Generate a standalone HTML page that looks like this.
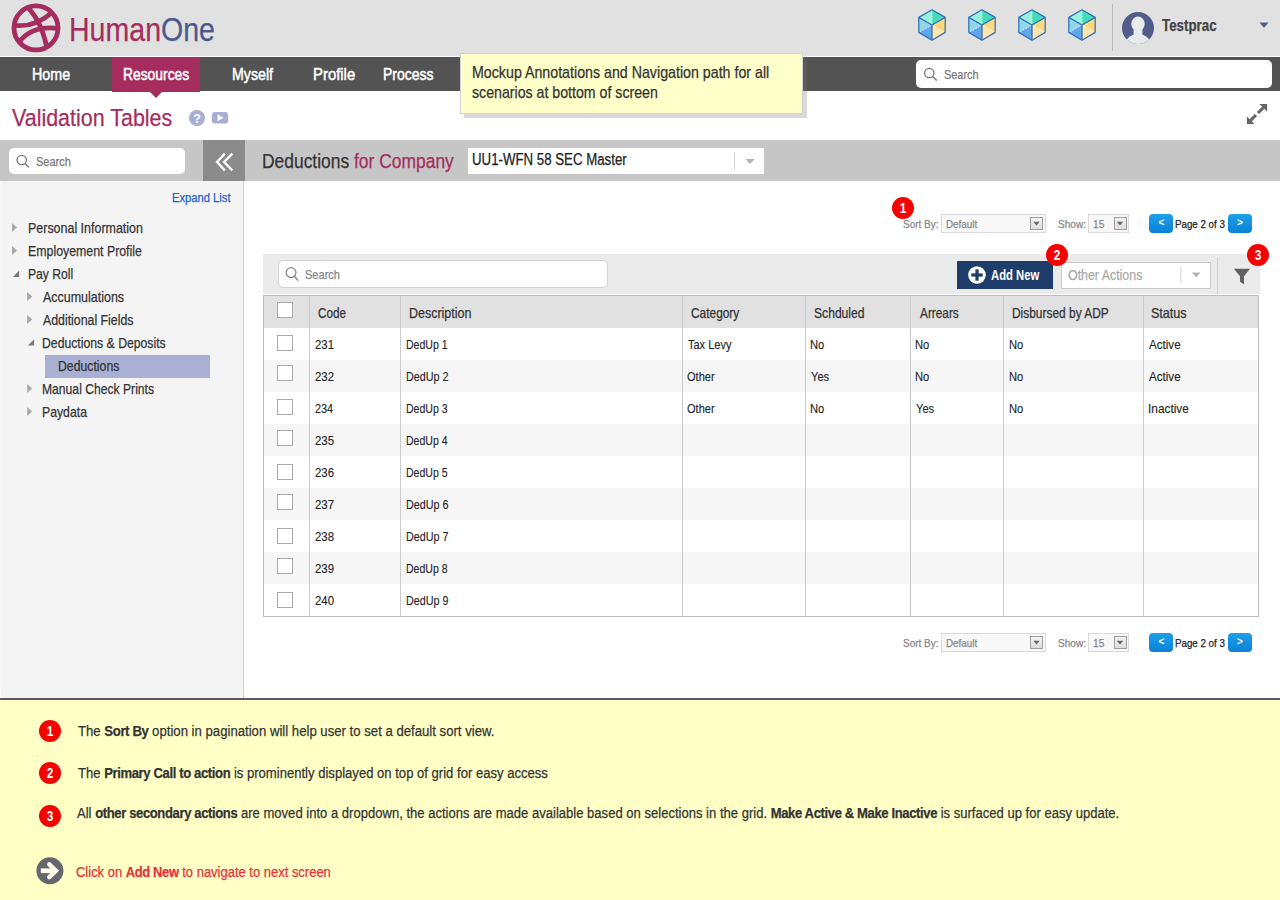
<!DOCTYPE html>
<html><head><meta charset="utf-8"><title>Validation Tables</title>
<style>
html,body{margin:0;padding:0;width:1280px;height:900px;overflow:hidden;background:#fff;font-family:"Liberation Sans",sans-serif;position:relative}
.a{position:absolute;box-sizing:border-box}
.t{position:absolute;line-height:1;white-space:nowrap;transform-origin:0 0;-webkit-text-stroke-width:0.25px}
b{font-weight:700;letter-spacing:-0.45px}
svg{position:absolute;left:0;top:0;overflow:visible}
.cb{position:absolute;width:16px;height:16px;box-sizing:border-box;border:1px solid #ababab;background:#fff;left:277px}
.badge{position:absolute;width:22px;height:22px;border-radius:50%;background:#f70000;color:#fff;font-weight:700;font-size:14.5px;line-height:22px;text-align:center}
.badge i{font-style:normal;display:inline-block;transform:scaleX(.82)}
.pbtn{position:absolute;width:24px;height:18.5px;border-radius:4px;background:linear-gradient(#1ea0ea,#0a82d6);color:#fff;font-size:10px;font-weight:700;line-height:18px;text-align:center}
.sel{position:absolute;height:18.5px;box-sizing:border-box;border:1px solid #d9d9d9;background:#f8f8f8}
.dd{position:absolute;width:13px;height:13px;box-sizing:border-box;border:1px solid #9d9d9d;background:linear-gradient(#f4f4f4,#dcdcdc)}
</style></head><body>
<!-- header -->
<div class="a" style="left:0;top:0;width:1280px;height:56px;background:#e1e1e1"></div>
<div class="a" style="left:0;top:57px;width:1280px;height:34px;background:#535353"></div>
<div class="a" style="left:112px;top:57px;width:88px;height:35px;background:#a52d5e"></div>
<svg width="1280" height="900" style="z-index:1">
 <!-- logo -->
 <g fill="none" stroke="#a52d5e" stroke-width="4.8">
  <circle cx="36" cy="27.9" r="22"/>
  <path d="M29,8.5 C36,17 42,26 46.5,46"/>
  <path d="M15.5,25.5 C26,26.5 39,24 52,12.5"/>
  <path d="M20,41 C28,31 40,26.5 57.5,28.3"/>
 </g>
 <!-- resources pointer -->
 <polygon points="149.5,91.5 162.5,91.5 156,98" fill="#a52d5e"/>
 <!-- cubes -->
 <polygon points="932.0,9.7 932.0,25.0 918.8,17.4" fill="#9bf2dc"/><polygon points="932.0,9.7 945.2,17.4 932.0,25.0" fill="#45dcb9"/><polygon points="918.8,17.4 932.0,25.0 918.8,32.4" fill="#8fd8ec"/><polygon points="932.0,25.0 932.0,40.2 918.8,32.4" fill="#62a6ea"/><polygon points="932.0,25.0 945.2,17.4 945.2,32.4" fill="#ffd77c"/><polygon points="932.0,25.0 945.2,32.4 932.0,40.2" fill="#ffe6a8"/><g stroke="#fff" stroke-width="0.9" stroke-dasharray="1.5,1.5" opacity="0.9"><line x1="932.0" y1="9.7" x2="932.0" y2="25.0"/><line x1="932.0" y1="25.0" x2="918.8" y2="32.4"/><line x1="932.0" y1="25.0" x2="945.2" y2="32.4"/></g><g fill="none" stroke="#3070b8" stroke-width="1.25" stroke-linejoin="round"><polygon points="932.0,9.7 945.2,17.4 945.2,32.4 932.0,40.2 918.8,32.4 918.8,17.4"/><polyline points="918.8,17.4 932.0,25.0 945.2,17.4"/><line x1="932.0" y1="25.0" x2="932.0" y2="40.2"/></g><polygon points="982.0,9.7 982.0,25.0 968.8,17.4" fill="#9bf2dc"/><polygon points="982.0,9.7 995.2,17.4 982.0,25.0" fill="#45dcb9"/><polygon points="968.8,17.4 982.0,25.0 968.8,32.4" fill="#8fd8ec"/><polygon points="982.0,25.0 982.0,40.2 968.8,32.4" fill="#62a6ea"/><polygon points="982.0,25.0 995.2,17.4 995.2,32.4" fill="#ffd77c"/><polygon points="982.0,25.0 995.2,32.4 982.0,40.2" fill="#ffe6a8"/><g stroke="#fff" stroke-width="0.9" stroke-dasharray="1.5,1.5" opacity="0.9"><line x1="982.0" y1="9.7" x2="982.0" y2="25.0"/><line x1="982.0" y1="25.0" x2="968.8" y2="32.4"/><line x1="982.0" y1="25.0" x2="995.2" y2="32.4"/></g><g fill="none" stroke="#3070b8" stroke-width="1.25" stroke-linejoin="round"><polygon points="982.0,9.7 995.2,17.4 995.2,32.4 982.0,40.2 968.8,32.4 968.8,17.4"/><polyline points="968.8,17.4 982.0,25.0 995.2,17.4"/><line x1="982.0" y1="25.0" x2="982.0" y2="40.2"/></g><polygon points="1032.0,9.7 1032.0,25.0 1018.8,17.4" fill="#9bf2dc"/><polygon points="1032.0,9.7 1045.2,17.4 1032.0,25.0" fill="#45dcb9"/><polygon points="1018.8,17.4 1032.0,25.0 1018.8,32.4" fill="#8fd8ec"/><polygon points="1032.0,25.0 1032.0,40.2 1018.8,32.4" fill="#62a6ea"/><polygon points="1032.0,25.0 1045.2,17.4 1045.2,32.4" fill="#ffd77c"/><polygon points="1032.0,25.0 1045.2,32.4 1032.0,40.2" fill="#ffe6a8"/><g stroke="#fff" stroke-width="0.9" stroke-dasharray="1.5,1.5" opacity="0.9"><line x1="1032.0" y1="9.7" x2="1032.0" y2="25.0"/><line x1="1032.0" y1="25.0" x2="1018.8" y2="32.4"/><line x1="1032.0" y1="25.0" x2="1045.2" y2="32.4"/></g><g fill="none" stroke="#3070b8" stroke-width="1.25" stroke-linejoin="round"><polygon points="1032.0,9.7 1045.2,17.4 1045.2,32.4 1032.0,40.2 1018.8,32.4 1018.8,17.4"/><polyline points="1018.8,17.4 1032.0,25.0 1045.2,17.4"/><line x1="1032.0" y1="25.0" x2="1032.0" y2="40.2"/></g><polygon points="1082.0,9.7 1082.0,25.0 1068.8,17.4" fill="#9bf2dc"/><polygon points="1082.0,9.7 1095.2,17.4 1082.0,25.0" fill="#45dcb9"/><polygon points="1068.8,17.4 1082.0,25.0 1068.8,32.4" fill="#8fd8ec"/><polygon points="1082.0,25.0 1082.0,40.2 1068.8,32.4" fill="#62a6ea"/><polygon points="1082.0,25.0 1095.2,17.4 1095.2,32.4" fill="#ffd77c"/><polygon points="1082.0,25.0 1095.2,32.4 1082.0,40.2" fill="#ffe6a8"/><g stroke="#fff" stroke-width="0.9" stroke-dasharray="1.5,1.5" opacity="0.9"><line x1="1082.0" y1="9.7" x2="1082.0" y2="25.0"/><line x1="1082.0" y1="25.0" x2="1068.8" y2="32.4"/><line x1="1082.0" y1="25.0" x2="1095.2" y2="32.4"/></g><g fill="none" stroke="#3070b8" stroke-width="1.25" stroke-linejoin="round"><polygon points="1082.0,9.7 1095.2,17.4 1095.2,32.4 1082.0,40.2 1068.8,32.4 1068.8,17.4"/><polyline points="1068.8,17.4 1082.0,25.0 1095.2,17.4"/><line x1="1082.0" y1="25.0" x2="1082.0" y2="40.2"/></g>
 <!-- divider -->
 <rect x="1112" y="4" width="1" height="47" fill="#b9b9b9"/>
 <!-- avatar -->
 <clipPath id="avc"><circle cx="1138" cy="28" r="16"/></clipPath>
 <circle cx="1138" cy="28" r="16" fill="#515c8a"/>
 <g clip-path="url(#avc)" fill="#e7ebeb">
  <ellipse cx="1138" cy="23.8" rx="6.7" ry="7.2"/>
  <ellipse cx="1138" cy="47.5" rx="14" ry="13.5"/>
  <rect x="1133.6" y="26" width="8.8" height="10"/>
 </g>
 <polygon points="1259.5,22.5 1268.5,22.5 1264,28" fill="#515c8a"/>
</svg>
<!-- nav search -->
<div class="a" style="left:916px;top:60px;width:356px;height:28px;background:#fff;border-radius:5px"></div>
<svg width="1280" height="900" style="z-index:1">
 <circle cx="929.3" cy="73" r="4.7" fill="none" stroke="#777" stroke-width="1.3"/>
 <line x1="932.7" y1="76.4" x2="936.7" y2="80.5" stroke="#777" stroke-width="1.4"/>
</svg>
<!-- tooltip -->
<div class="a" style="left:464px;top:57px;width:343px;height:61px;background:rgba(116,116,116,0.27);z-index:2"></div>
<div class="a" style="left:460px;top:53px;width:343px;height:61px;background:#ffffc9;border:1px solid #d2d2d2;z-index:2"></div>
<!-- title icons / expand -->
<svg width="1280" height="900" style="z-index:1">
 <circle cx="197" cy="118" r="8" fill="#a9afd3"/>
 <text x="197" y="122.5" font-size="12.5" font-weight="700" fill="#fff" text-anchor="middle" font-family="Liberation Sans">?</text>
 <rect x="212" y="112" width="16" height="11.5" rx="2.5" fill="#a9afd3"/>
 <polygon points="217.5,114.3 217.5,121.2 223.5,117.75" fill="#fff"/>
 <g fill="#666">
  <polygon points="1259.4,103.9 1267.1,103.9 1267.1,111.6"/>
  <polygon points="1246.9,116.4 1246.9,124.1 1254.6,124.1"/>
 </g>
 <g stroke="#666" stroke-width="3.1">
  <line x1="1263.6" y1="107.4" x2="1258" y2="113"/>
  <line x1="1256" y1="115" x2="1250.4" y2="120.6"/>
 </g>
</svg>
<!-- left panel -->
<div class="a" style="left:0;top:181px;width:243px;height:517px;background:#f4f4f4"></div>
<div class="a" style="left:0;top:181px;width:1px;height:517px;background:#fbfbfb"></div>
<div class="a" style="left:243px;top:181px;width:1px;height:517px;background:#cfcfcf"></div>
<div class="a" style="left:0;top:140px;width:203px;height:41px;background:#c6c6c6"></div>
<div class="a" style="left:9px;top:148px;width:176px;height:26px;background:#fff;border-radius:5px"></div>
<div class="a" style="left:203px;top:140px;width:42px;height:41px;background:#8b8b8b"></div>
<div class="a" style="left:245px;top:140px;width:1035px;height:41px;background:#c6c6c6"></div>
<div class="a" style="left:468px;top:148px;width:296px;height:26px;background:#fff"></div>
<div class="a" style="left:45px;top:355px;width:165px;height:23px;background:#a9b0d3"></div>
<svg width="1280" height="900" style="z-index:1">
 <circle cx="21.7" cy="160" r="4.7" fill="none" stroke="#777" stroke-width="1.3"/>
 <line x1="25.1" y1="163.4" x2="28.8" y2="167.3" stroke="#777" stroke-width="1.4"/>
 <g fill="none" stroke="#fff" stroke-width="2.3">
  <polyline points="224.8,153.6 217,162 224.8,170.4"/>
  <polyline points="232.4,153.6 224.1,162 232.4,170.4"/>
 </g>
 <!-- tree triangles -->
 <g fill="#a9a9a9">
  <polygon points="12,223 17,227.5 12,232"/>
  <polygon points="12,246 17,250.5 12,255"/>
  <polygon points="27.2,292 32.2,296.5 27.2,301"/>
  <polygon points="27.2,315 32.2,319.5 27.2,324"/>
  <polygon points="27.2,384 32.2,388.5 27.2,393"/>
  <polygon points="27.2,407 32.2,411.5 27.2,416"/>
 </g>
 <g fill="#797979">
  <polygon points="13,277 19.2,277 19.2,270.6"/>
  <polygon points="27.8,345.6 34.1,345.6 34.1,339.4"/>
 </g>
 <!-- select -->
 <rect x="734" y="152" width="1" height="18" fill="#d4d4d4"/>
 <polygon points="745.4,159 754.7,159 750,164" fill="#b3b3b3"/>
</svg>
<div class="sel" style="left:941px;top:214.3px;width:104.5px"></div><div class="dd" style="left:1030px;top:217.0px"></div><div class="sel" style="left:1088px;top:214.3px;width:40.5px"></div><div class="dd" style="left:1113.5px;top:217.0px"></div><svg width="1280" height="900" style="z-index:1"><polygon points="1033.3,221.8 1039.7,221.8 1036.5,225.6" fill="#666"/><polygon points="1116.8,221.8 1123.2,221.8 1120,225.6" fill="#666"/></svg><div class="pbtn" style="left:1149.3px;top:214.4px">&lt;</div><div class="pbtn" style="left:1228px;top:214.4px">&gt;</div><div class="sel" style="left:941px;top:633.3px;width:104.5px"></div><div class="dd" style="left:1030px;top:636.0px"></div><div class="sel" style="left:1088px;top:633.3px;width:40.5px"></div><div class="dd" style="left:1113.5px;top:636.0px"></div><svg width="1280" height="900" style="z-index:1"><polygon points="1033.3,640.8 1039.7,640.8 1036.5,644.6" fill="#666"/><polygon points="1116.8,640.8 1123.2,640.8 1120,644.6" fill="#666"/></svg><div class="pbtn" style="left:1149.3px;top:633.4px">&lt;</div><div class="pbtn" style="left:1228px;top:633.4px">&gt;</div><div class="badge" style="left:892px;top:197px"><i>1</i></div>
<!-- toolbar -->
<div class="a" style="left:263px;top:254px;width:997px;height:40px;background:#ebebeb"></div>
<div class="a" style="left:277.5px;top:260px;width:330px;height:28px;background:#fff;border:1px solid #d3d3d3;border-radius:5px"></div>
<div class="a" style="left:957px;top:261px;width:96px;height:28px;background:#1f3d6b"></div>
<div class="a" style="left:1061px;top:261.5px;width:149.5px;height:27.5px;background:#fff;border:1px solid #c9c9c9"></div>
<div class="a" style="left:1217px;top:257.5px;width:1px;height:36px;background:#d0d0d0"></div>
<svg width="1280" height="900" style="z-index:1">
 <circle cx="291" cy="272.6" r="4.9" fill="none" stroke="#888" stroke-width="1.3"/>
 <line x1="294.5" y1="276.2" x2="298" y2="280.6" stroke="#888" stroke-width="1.4"/>
 <circle cx="977" cy="275" r="8.8" fill="#fff"/>
 <rect x="971.3" y="273.4" width="11.4" height="3.2" fill="#1f3d6b"/>
 <rect x="975.4" y="269.3" width="3.2" height="11.4" fill="#1f3d6b"/>
 <rect x="1180.4" y="266.5" width="1" height="17" fill="#d4d4d4"/>
 <polygon points="1191.9,272.4 1200.4,272.4 1196.15,277.4" fill="#b3b3b3"/>
 <polygon points="1233.8,268.8 1250,268.8 1244,276.2 1244,284.3 1240,281.8 1240,276.2" fill="#626262"/>
</svg>
<div class="badge" style="left:1046px;top:244px"><i>2</i></div>
<div class="badge" style="left:1247px;top:244px"><i>3</i></div>
<div class="a" style="left:263px;top:295px;width:996px;height:322px;background:#fff;border:1px solid #bdbdbd"></div><div class="a" style="left:264px;top:296px;width:994px;height:32px;background:#e1e1e1"></div><div class="a" style="left:264px;top:360px;width:994px;height:32px;background:#f6f6f6"></div><div class="a" style="left:264px;top:424px;width:994px;height:32px;background:#f6f6f6"></div><div class="a" style="left:264px;top:488px;width:994px;height:32px;background:#f6f6f6"></div><div class="a" style="left:264px;top:552px;width:994px;height:32px;background:#f6f6f6"></div><div class="a" style="left:309px;top:296px;width:1px;height:320px;background:#cacaca"></div><div class="a" style="left:400px;top:296px;width:1px;height:320px;background:#cacaca"></div><div class="a" style="left:682px;top:296px;width:1px;height:320px;background:#cacaca"></div><div class="a" style="left:805px;top:296px;width:1px;height:320px;background:#cacaca"></div><div class="a" style="left:910px;top:296px;width:1px;height:320px;background:#cacaca"></div><div class="a" style="left:1003px;top:296px;width:1px;height:320px;background:#cacaca"></div><div class="a" style="left:1143px;top:296px;width:1px;height:320px;background:#cacaca"></div><div class="cb" style="top:302px"></div><div class="cb" style="top:335px"></div><div class="cb" style="top:365px"></div><div class="cb" style="top:399px"></div><div class="cb" style="top:430px"></div><div class="cb" style="top:464px"></div><div class="cb" style="top:494px"></div><div class="cb" style="top:528px"></div><div class="cb" style="top:558px"></div><div class="cb" style="top:592px"></div>
<!-- footer -->
<div class="a" style="left:0;top:698px;width:1280px;height:202px;background:#ffffc6;border-top:2px solid #5a5862"></div>
<div class="badge" style="left:39px;top:720px"><i>1</i></div>
<div class="badge" style="left:39px;top:761.5px"><i>2</i></div>
<div class="badge" style="left:39px;top:805px"><i>3</i></div>
<svg width="1280" height="900" style="z-index:1">
 <circle cx="49.9" cy="870.7" r="13.5" fill="#66666e"/>
 <rect x="40.8" y="868.4" width="12" height="4.7" fill="#fffdea"/>
 <polyline points="49.3,864.4 55.9,870.75 49.3,877.1" fill="none" stroke="#fffdea" stroke-width="4.5" stroke-linecap="round" stroke-linejoin="miter"/>
</svg>
<div style="position:absolute;left:0;top:0;z-index:3">
<div class="t" style="left:69.48px;top:11.72px;font-size:34px;color:#a52d5e;font-weight:400;transform:scaleX(0.8394);">Human<span style="color:#4a5a8c">One</span></div>
<div class="t" style="left:1161.90px;top:16.73px;font-size:16.5px;color:#444;font-weight:700;transform:scaleX(0.8075);">Testprac</div>
<div class="t" style="left:32.43px;top:65.73px;font-size:16.5px;color:#fff;font-weight:400;transform:scaleX(0.8667);-webkit-text-stroke-width:0.5px">Home</div>
<div class="t" style="left:122.56px;top:65.73px;font-size:16.5px;color:#fff;font-weight:400;transform:scaleX(0.8390);-webkit-text-stroke-width:0.5px">Resources</div>
<div class="t" style="left:232.44px;top:65.73px;font-size:16.5px;color:#fff;font-weight:400;transform:scaleX(0.8596);-webkit-text-stroke-width:0.5px">Myself</div>
<div class="t" style="left:312.50px;top:65.73px;font-size:16.5px;color:#fff;font-weight:400;transform:scaleX(0.9022);-webkit-text-stroke-width:0.5px">Profile</div>
<div class="t" style="left:382.85px;top:65.73px;font-size:16.5px;color:#fff;font-weight:400;transform:scaleX(0.8483);-webkit-text-stroke-width:0.5px">Process</div>
<div class="t" style="left:943.56px;top:68.00px;font-size:13px;color:#7a7a7a;font-weight:400;transform:scaleX(0.8400);">Search</div>
<div class="t" style="left:472.46px;top:63.81px;font-size:17px;color:#333;font-weight:400;transform:scaleX(0.8365);">Mockup Annotations and Navigation path for all</div>
<div class="t" style="left:472.47px;top:84.01px;font-size:17px;color:#333;font-weight:400;transform:scaleX(0.8335);">scenarios at bottom of screen</div>
<div class="t" style="left:11.60px;top:105.76px;font-size:24.5px;color:#a52d5e;font-weight:400;transform:scaleX(0.8758);">Validation Tables</div>
<div class="t" style="left:35.65px;top:154.80px;font-size:13px;color:#7a7a7a;font-weight:400;transform:scaleX(0.8475);">Search</div>
<div class="t" style="left:171.94px;top:190.70px;font-size:13px;color:#1a62c8;font-weight:400;transform:scaleX(0.8612);">Expand List</div>
<div class="t" style="left:27.67px;top:220.20px;font-size:15px;color:#333;font-weight:400;transform:scaleX(0.8303);">Personal Information</div>
<div class="t" style="left:27.68px;top:242.90px;font-size:15px;color:#333;font-weight:400;transform:scaleX(0.8230);">Employement Profile</div>
<div class="t" style="left:27.69px;top:266.05px;font-size:15px;color:#333;font-weight:400;transform:scaleX(0.8102);">Pay Roll</div>
<div class="t" style="left:43.10px;top:288.90px;font-size:15px;color:#333;font-weight:400;transform:scaleX(0.8314);">Accumulations</div>
<div class="t" style="left:43.10px;top:311.90px;font-size:15px;color:#333;font-weight:400;transform:scaleX(0.8218);">Additional Fields</div>
<div class="t" style="left:42.28px;top:334.80px;font-size:15px;color:#333;font-weight:400;transform:scaleX(0.8153);">Deductions &amp; Deposits</div>
<div class="t" style="left:57.68px;top:357.70px;font-size:15px;color:#333;font-weight:400;transform:scaleX(0.8176);">Deductions</div>
<div class="t" style="left:42.29px;top:380.70px;font-size:15px;color:#333;font-weight:400;transform:scaleX(0.8095);">Manual Check Prints</div>
<div class="t" style="left:42.28px;top:403.80px;font-size:15px;color:#333;font-weight:400;transform:scaleX(0.8167);">Paydata</div>
<div class="t" style="left:262.01px;top:150.57px;font-size:20px;color:#333;font-weight:400;transform:scaleX(0.8713);">Deductions <span style="color:#a52d5e">for Company</span></div>
<div class="t" style="left:472.37px;top:152.46px;font-size:16px;color:#222;font-weight:400;transform:scaleX(0.8285);">UU1-WFN 58 SEC Master</div>
<div class="t" style="left:903.39px;top:218.69px;font-size:11px;color:#888;font-weight:400;transform:scaleX(0.9054);">Sort By:</div>
<div class="t" style="left:945.91px;top:218.69px;font-size:11px;color:#888;font-weight:400;transform:scaleX(0.8941);">Default</div>
<div class="t" style="left:1057.68px;top:218.69px;font-size:11px;color:#888;font-weight:400;transform:scaleX(0.9172);">Show:</div>
<div class="t" style="left:1092.87px;top:218.69px;font-size:11px;color:#888;font-weight:400;transform:scaleX(0.9273);">15</div>
<div class="t" style="left:1175.41px;top:218.69px;font-size:11px;color:#222;font-weight:400;transform:scaleX(0.8855);">Page 2 of 3</div>
<div class="t" style="left:903.39px;top:637.69px;font-size:11px;color:#888;font-weight:400;transform:scaleX(0.9054);">Sort By:</div>
<div class="t" style="left:945.91px;top:637.69px;font-size:11px;color:#888;font-weight:400;transform:scaleX(0.8941);">Default</div>
<div class="t" style="left:1057.68px;top:637.69px;font-size:11px;color:#888;font-weight:400;transform:scaleX(0.9172);">Show:</div>
<div class="t" style="left:1092.87px;top:637.69px;font-size:11px;color:#888;font-weight:400;transform:scaleX(0.9273);">15</div>
<div class="t" style="left:1175.41px;top:637.69px;font-size:11px;color:#222;font-weight:400;transform:scaleX(0.8855);">Page 2 of 3</div>
<div class="t" style="left:304.55px;top:267.70px;font-size:13px;color:#888;font-weight:400;transform:scaleX(0.8500);">Search</div>
<div class="t" style="left:991.40px;top:267.30px;font-size:15px;color:#fff;font-weight:700;transform:scaleX(0.7531);-webkit-text-stroke-width:0">Add New</div>
<div class="t" style="left:1068.32px;top:268.45px;font-size:14px;color:#aaa;font-weight:400;transform:scaleX(0.8843);">Other Actions</div>
<div class="t" style="left:317.59px;top:305.93px;font-size:14.5px;color:#333;font-weight:400;transform:scaleX(0.8061);">Code</div>
<div class="t" style="left:408.74px;top:305.93px;font-size:14.5px;color:#333;font-weight:400;transform:scaleX(0.8606);">Description</div>
<div class="t" style="left:690.58px;top:305.93px;font-size:14.5px;color:#333;font-weight:400;transform:scaleX(0.8207);">Category</div>
<div class="t" style="left:813.66px;top:305.93px;font-size:14.5px;color:#333;font-weight:400;transform:scaleX(0.8356);">Schduled</div>
<div class="t" style="left:919.50px;top:305.93px;font-size:14.5px;color:#333;font-weight:400;transform:scaleX(0.8149);">Arrears</div>
<div class="t" style="left:1011.78px;top:305.93px;font-size:14.5px;color:#333;font-weight:400;transform:scaleX(0.8224);">Disbursed by ADP</div>
<div class="t" style="left:1151.43px;top:305.93px;font-size:14.5px;color:#333;font-weight:400;transform:scaleX(0.8650);">Status</div>
<div class="t" style="left:315.28px;top:338.50px;font-size:12.4px;color:#222;font-weight:400;transform:scaleX(0.9211);-webkit-text-stroke-width:0.1px">231</div>
<div class="t" style="left:405.55px;top:338.50px;font-size:12.4px;color:#222;font-weight:400;transform:scaleX(0.8521);-webkit-text-stroke-width:0.1px">DedUp 1</div>
<div class="t" style="left:688.30px;top:338.50px;font-size:12.4px;color:#222;font-weight:400;transform:scaleX(0.8878);-webkit-text-stroke-width:0.1px">Tax Levy</div>
<div class="t" style="left:810.40px;top:338.50px;font-size:12.4px;color:#222;font-weight:400;transform:scaleX(0.9000);-webkit-text-stroke-width:0.1px">No</div>
<div class="t" style="left:915.40px;top:338.50px;font-size:12.4px;color:#222;font-weight:400;transform:scaleX(0.9000);-webkit-text-stroke-width:0.1px">No</div>
<div class="t" style="left:1008.60px;top:338.50px;font-size:12.4px;color:#222;font-weight:400;transform:scaleX(0.9000);-webkit-text-stroke-width:0.1px">No</div>
<div class="t" style="left:1149.30px;top:338.50px;font-size:12.4px;color:#222;font-weight:400;transform:scaleX(0.9364);-webkit-text-stroke-width:0.1px">Active</div>
<div class="t" style="left:315.28px;top:370.50px;font-size:12.4px;color:#222;font-weight:400;transform:scaleX(0.9211);-webkit-text-stroke-width:0.1px">232</div>
<div class="t" style="left:405.53px;top:370.50px;font-size:12.4px;color:#222;font-weight:400;transform:scaleX(0.8702);-webkit-text-stroke-width:0.1px">DedUp 2</div>
<div class="t" style="left:687.41px;top:370.50px;font-size:12.4px;color:#222;font-weight:400;transform:scaleX(0.8900);-webkit-text-stroke-width:0.1px">Other</div>
<div class="t" style="left:811.30px;top:370.50px;font-size:12.4px;color:#222;font-weight:400;transform:scaleX(0.8950);-webkit-text-stroke-width:0.1px">Yes</div>
<div class="t" style="left:915.40px;top:370.50px;font-size:12.4px;color:#222;font-weight:400;transform:scaleX(0.9000);-webkit-text-stroke-width:0.1px">No</div>
<div class="t" style="left:1008.60px;top:370.50px;font-size:12.4px;color:#222;font-weight:400;transform:scaleX(0.9000);-webkit-text-stroke-width:0.1px">No</div>
<div class="t" style="left:1149.30px;top:370.50px;font-size:12.4px;color:#222;font-weight:400;transform:scaleX(0.9364);-webkit-text-stroke-width:0.1px">Active</div>
<div class="t" style="left:315.32px;top:402.50px;font-size:12.4px;color:#222;font-weight:400;transform:scaleX(0.8750);-webkit-text-stroke-width:0.1px">234</div>
<div class="t" style="left:405.55px;top:402.50px;font-size:12.4px;color:#222;font-weight:400;transform:scaleX(0.8521);-webkit-text-stroke-width:0.1px">DedUp 3</div>
<div class="t" style="left:687.41px;top:402.50px;font-size:12.4px;color:#222;font-weight:400;transform:scaleX(0.8900);-webkit-text-stroke-width:0.1px">Other</div>
<div class="t" style="left:810.40px;top:402.50px;font-size:12.4px;color:#222;font-weight:400;transform:scaleX(0.9000);-webkit-text-stroke-width:0.1px">No</div>
<div class="t" style="left:916.30px;top:402.50px;font-size:12.4px;color:#222;font-weight:400;transform:scaleX(0.8950);-webkit-text-stroke-width:0.1px">Yes</div>
<div class="t" style="left:1008.60px;top:402.50px;font-size:12.4px;color:#222;font-weight:400;transform:scaleX(0.9000);-webkit-text-stroke-width:0.1px">No</div>
<div class="t" style="left:1148.34px;top:402.50px;font-size:12.4px;color:#222;font-weight:400;transform:scaleX(0.9561);-webkit-text-stroke-width:0.1px">Inactive</div>
<div class="t" style="left:315.28px;top:434.50px;font-size:12.4px;color:#222;font-weight:400;transform:scaleX(0.9211);-webkit-text-stroke-width:0.1px">235</div>
<div class="t" style="left:405.55px;top:434.50px;font-size:12.4px;color:#222;font-weight:400;transform:scaleX(0.8521);-webkit-text-stroke-width:0.1px">DedUp 4</div>
<div class="t" style="left:315.28px;top:466.50px;font-size:12.4px;color:#222;font-weight:400;transform:scaleX(0.9211);-webkit-text-stroke-width:0.1px">236</div>
<div class="t" style="left:405.55px;top:466.50px;font-size:12.4px;color:#222;font-weight:400;transform:scaleX(0.8521);-webkit-text-stroke-width:0.1px">DedUp 5</div>
<div class="t" style="left:315.28px;top:498.50px;font-size:12.4px;color:#222;font-weight:400;transform:scaleX(0.9211);-webkit-text-stroke-width:0.1px">237</div>
<div class="t" style="left:405.53px;top:498.50px;font-size:12.4px;color:#222;font-weight:400;transform:scaleX(0.8702);-webkit-text-stroke-width:0.1px">DedUp 6</div>
<div class="t" style="left:315.28px;top:530.50px;font-size:12.4px;color:#222;font-weight:400;transform:scaleX(0.9211);-webkit-text-stroke-width:0.1px">238</div>
<div class="t" style="left:405.53px;top:530.50px;font-size:12.4px;color:#222;font-weight:400;transform:scaleX(0.8702);-webkit-text-stroke-width:0.1px">DedUp 7</div>
<div class="t" style="left:315.28px;top:562.50px;font-size:12.4px;color:#222;font-weight:400;transform:scaleX(0.9211);-webkit-text-stroke-width:0.1px">239</div>
<div class="t" style="left:405.55px;top:562.50px;font-size:12.4px;color:#222;font-weight:400;transform:scaleX(0.8521);-webkit-text-stroke-width:0.1px">DedUp 8</div>
<div class="t" style="left:315.28px;top:594.50px;font-size:12.4px;color:#222;font-weight:400;transform:scaleX(0.9211);-webkit-text-stroke-width:0.1px">240</div>
<div class="t" style="left:405.53px;top:594.50px;font-size:12.4px;color:#222;font-weight:400;transform:scaleX(0.8702);-webkit-text-stroke-width:0.1px">DedUp 9</div>
<div class="t" style="left:78.10px;top:723.38px;font-size:15.5px;color:#333;font-weight:400;transform:scaleX(0.8489);">The <b>Sort By</b> option in pagination will help user to set a default sort view.</div>
<div class="t" style="left:78.10px;top:764.63px;font-size:15.5px;color:#333;font-weight:400;transform:scaleX(0.8436);">The <b>Primary Call to action</b> is prominently displayed on top of grid for easy access</div>
<div class="t" style="left:77.10px;top:804.78px;font-size:15.5px;color:#333;font-weight:400;transform:scaleX(0.8422);">All <b>other secondary actions</b> are moved into a dropdown, the actions are made available based on selections in the grid. <b>Make Active &amp; Make Inactive</b> is surfaced up for easy update.</div>
<div class="t" style="left:76.26px;top:863.78px;font-size:15.5px;color:#e8313b;font-weight:400;transform:scaleX(0.8371);">Click on <b>Add New</b> to navigate to next screen</div>
</div>
</body></html>
